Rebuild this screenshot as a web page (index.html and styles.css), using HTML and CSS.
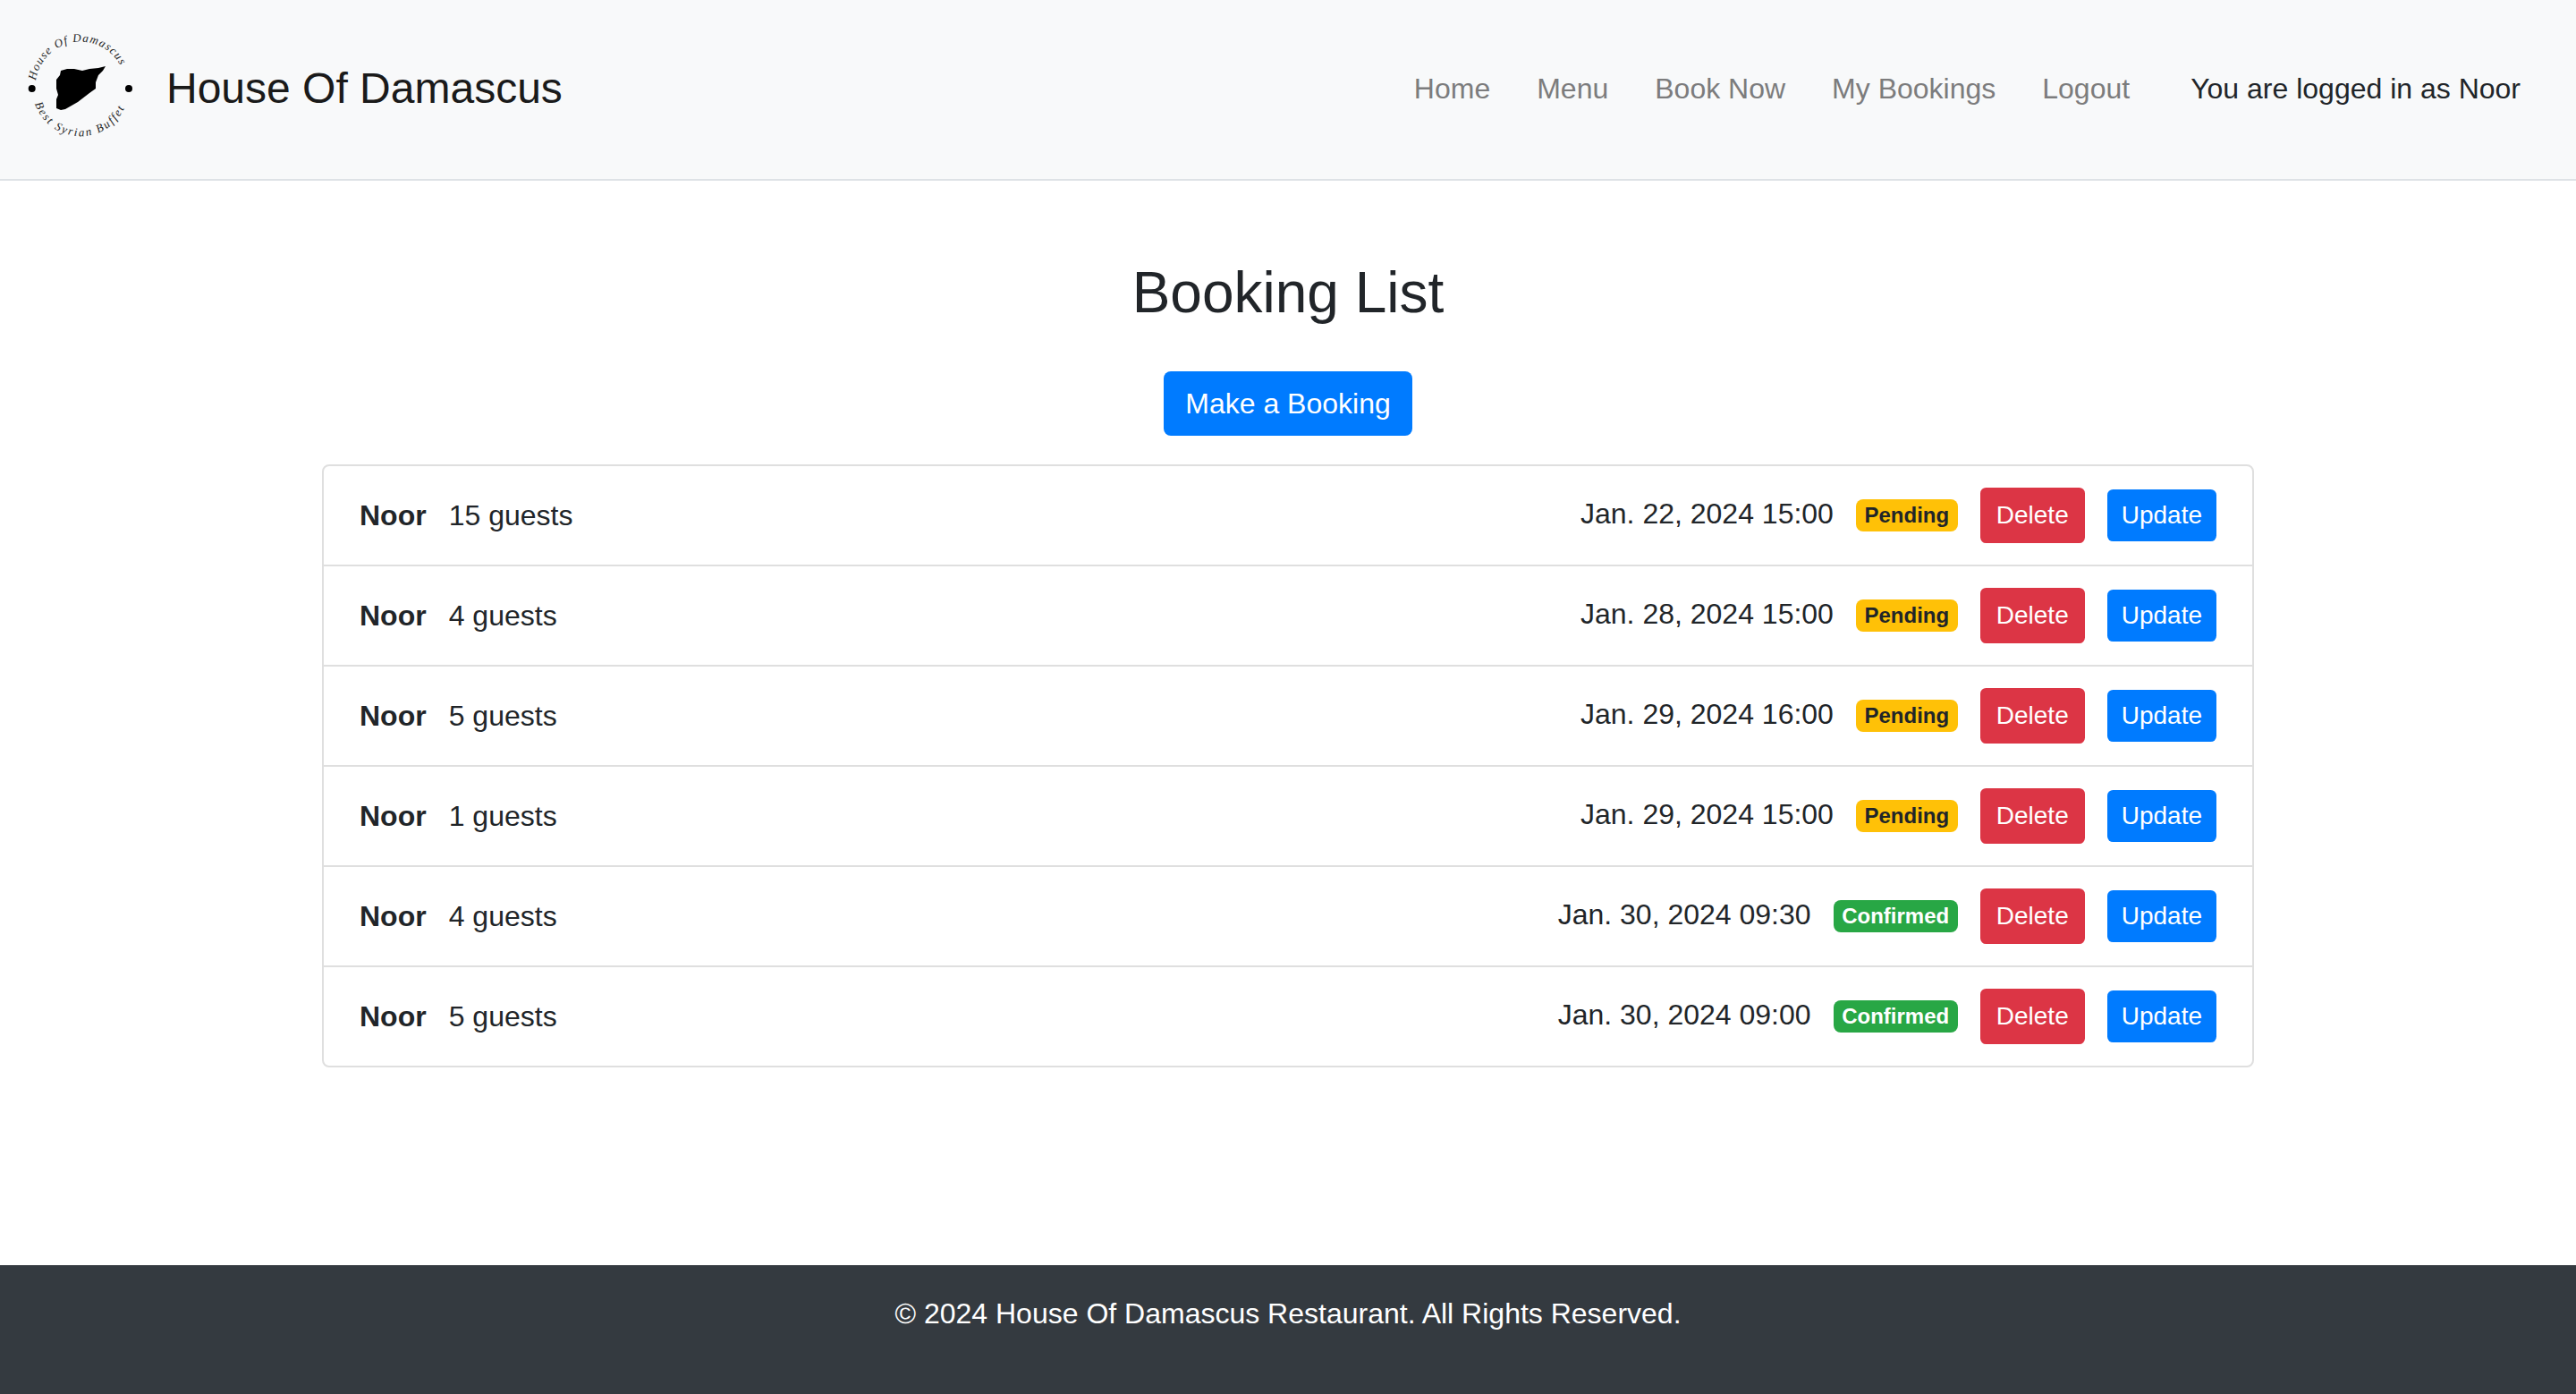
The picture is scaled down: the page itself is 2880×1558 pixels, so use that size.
FILE: index.html
```html
<!DOCTYPE html>
<html lang="en">
<head>
    <meta charset="UTF-8">
    <title>House Of Damascus</title>
    <link rel="stylesheet" href="styles.css">
</head>
<body>
    <header class="navbar">
        <a class="brand" href="#">
            <svg class="logo" width="140" height="150" viewBox="0 0 140 150">
                <defs>
                    <path id="arcTop" d="M20 66A50.5 50.5 0 0 1 120 66"/>
                    <path id="arcBottom" d="M19 92A54 54 0 0 0 121 92"/>
                </defs>
                <text class="logo-text logo-top"><textPath href="#arcTop">House Of Damascus</textPath></text>
                <text class="logo-text logo-bottom"><textPath href="#arcBottom">Best Syrian Buffet</textPath></text>
                <circle cx="15.7" cy="75" r="4"/>
                <circle cx="124" cy="75" r="4"/>
                <path d="M98 50L90 52 80 53 72 55 63 53 55 53 48 55 47 60 43 65 43 75 45 82 43 87 43 97 48 99 53 98 67 90 80 80 87 75 87 68 90 60 95 55Z"/>
            </svg>
            <span>House Of Damascus</span>
        </a>
        <nav class="nav">
            <a href="#">Home</a>
            <a href="#">Menu</a>
            <a href="#">Book Now</a>
            <a href="#">My Bookings</a>
            <a href="#">Logout</a>
        </nav>
        <span class="user">You are logged in as Noor</span>
    </header>

    <main class="content">
        <h1>Booking List</h1>
        <a class="btn btn-primary" href="#">Make a Booking</a>
        <ul class="list">
            <li class="row">
                <strong>Noor</strong>
                <span class="guests">15 guests</span>
                <span class="date">Jan. 22, 2024 15:00</span>
                <span class="badge pending">Pending</span>
                <button class="btn-sm btn-delete">Delete</button>
                <a class="btn-sm btn-primary" href="#">Update</a>
            </li>
            <li class="row">
                <strong>Noor</strong>
                <span class="guests">4 guests</span>
                <span class="date">Jan. 28, 2024 15:00</span>
                <span class="badge pending">Pending</span>
                <button class="btn-sm btn-delete">Delete</button>
                <a class="btn-sm btn-primary" href="#">Update</a>
            </li>
            <li class="row">
                <strong>Noor</strong>
                <span class="guests">5 guests</span>
                <span class="date">Jan. 29, 2024 16:00</span>
                <span class="badge pending">Pending</span>
                <button class="btn-sm btn-delete">Delete</button>
                <a class="btn-sm btn-primary" href="#">Update</a>
            </li>
            <li class="row">
                <strong>Noor</strong>
                <span class="guests">1 guests</span>
                <span class="date">Jan. 29, 2024 15:00</span>
                <span class="badge pending">Pending</span>
                <button class="btn-sm btn-delete">Delete</button>
                <a class="btn-sm btn-primary" href="#">Update</a>
            </li>
            <li class="row">
                <strong>Noor</strong>
                <span class="guests">4 guests</span>
                <span class="date">Jan. 30, 2024 09:30</span>
                <span class="badge confirmed">Confirmed</span>
                <button class="btn-sm btn-delete">Delete</button>
                <a class="btn-sm btn-primary" href="#">Update</a>
            </li>
            <li class="row">
                <strong>Noor</strong>
                <span class="guests">5 guests</span>
                <span class="date">Jan. 30, 2024 09:00</span>
                <span class="badge confirmed">Confirmed</span>
                <button class="btn-sm btn-delete">Delete</button>
                <a class="btn-sm btn-primary" href="#">Update</a>
            </li>
        </ul>
    </main>

    <footer class="footer">&copy; 2024 House Of Damascus Restaurant. All Rights Reserved.</footer>
</body>
</html>
```

FILE: styles.css
```css
*{
    margin: 0;
    padding: 0;
    box-sizing: border-box;
}
body{
    min-height: 100vh;
    display: flex;
    flex-direction: column;
    font-family: "Liberation Sans", Arial, sans-serif;
    font-size: 32px;
    line-height: 48px;
    color: #212529;
    background: #ffffff;
}
a{
    text-decoration: none;
}

/* top bar */
.navbar{
    height: 202px;
    flex: none;
    display: flex;
    align-items: center;
    padding: 0 62px 2px 20px;
    background: #f8f9fa;
    border-bottom: 2px solid #dee2e6;
}
.brand{
    display: flex;
    align-items: center;
    gap: 26px;
    font-size: 48px;
    line-height: 72px;
    color: #1a1a1a;
}
.logo{
    flex: none;
}
.logo-text{
    font-family: "Liberation Serif", serif;
    font-style: italic;
    font-size: 13px;
    fill: #222222;
}
.logo-top{
    letter-spacing: 1.2px;
}
.logo-bottom{
    letter-spacing: 2px;
}
.nav{
    display: flex;
    gap: 52px;
    margin-left: auto;
}
.nav a{
    color: #7c7c7d;
}
.user{
    margin-left: 68px;
    color: #212529;
}

/* booking list */
.content{
    flex: 1;
    display: flex;
    flex-direction: column;
    align-items: center;
    padding-top: 87px;
}
h1{
    font-size: 64px;
    font-weight: 400;
    line-height: 77px;
    margin-bottom: 49px;
}
.btn{
    display: block;
    padding: 12px 24px;
    border-radius: 8px;
}
.btn-primary{
    color: #ffffff;
    background: #007bff;
}
.list{
    width: 2160px;
    margin-top: 32px;
    list-style: none;
    border: 2px solid #dfdfdf;
    border-radius: 8px;
}
.row{
    display: flex;
    align-items: center;
    gap: 25px;
    padding: 24px 40px;
    border-bottom: 2px solid #dfdfdf;
}
.row:last-child{
    border-bottom: 0;
}
.date{
    margin-left: auto;
    margin-bottom: 4px;
}
.badge{
    padding: 6px 9.6px;
    font-size: 24px;
    font-weight: 700;
    line-height: 24px;
    border-radius: 8px;
}
.pending{
    color: #212529;
    background: #ffc107;
}
.confirmed{
    color: #ffffff;
    background: #28a745;
}
.btn-sm{
    padding: 8px 16px;
    font-family: inherit;
    font-size: 28px;
    line-height: 42px;
    border-radius: 6.4px;
}
.btn-delete{
    color: #ffffff;
    background: #dc3545;
    border: 2px solid #dc3545;
}

.footer{
    height: 144px;
    flex: none;
    padding-top: 30px;
    text-align: center;
    color: #ffffff;
    background: #343a40;
}
```
